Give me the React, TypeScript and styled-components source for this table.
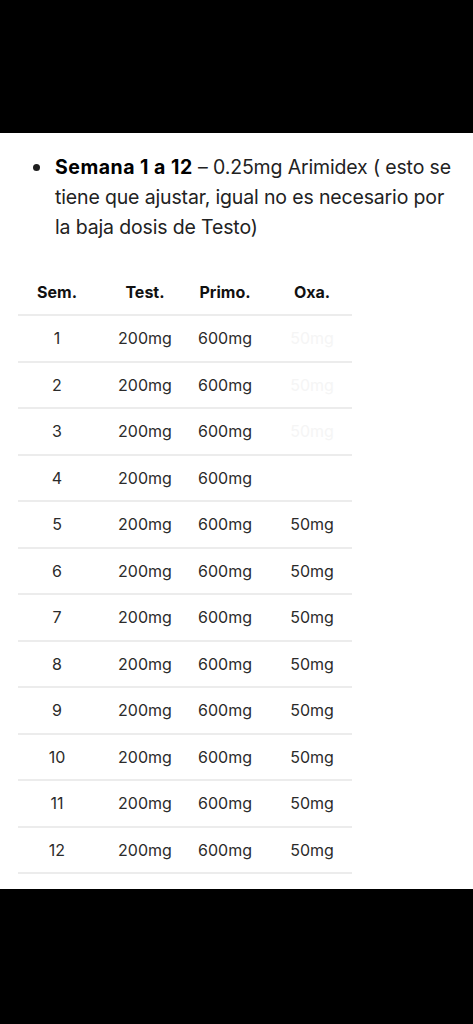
import React from "react";
import styled, { createGlobalStyle } from "styled-components";

const Global = createGlobalStyle`
  html, body { margin: 0; padding: 0; background: #000; }
  body { font-family: Inter, "Noto Sans", "Liberation Sans", sans-serif; -webkit-font-smoothing: antialiased; }
`;

const Screen = styled.div`
  width: 473px;
  height: 1024px;
  display: flex;
  flex-direction: column;
  background: #000;
`;

const Bar = styled.div<{ $h: number }>`
  height: ${(p) => p.$h}px;
  flex: none;
  background: #000;
`;

const Page = styled.div`
  flex: none;
  height: 756px;
  background: #fff;
  padding: 19px 0 0 18px;
  box-sizing: border-box;
  overflow: hidden;
`;

const List = styled.ul`
  margin: 0;
  padding: 0 0 0 37px;
  list-style: none;
`;

const Item = styled.li`
  position: relative;
  font-size: 19.5px;
  line-height: 30px;
  color: #222;
  letter-spacing: -0.15px;
  width: 405px;
  &::before {
    content: "";
    position: absolute;
    left: -22px;
    top: 12px;
    width: 7px;
    height: 7px;
    border-radius: 50%;
    background: #1f1f1f;
  }
`;

const Strong = styled.strong`
  font-weight: 700;
  color: #000;
  letter-spacing: 0.5px;
`;

const Table = styled.div`
  margin-top: 28px;
  width: 334px;
  display: flex;
  flex-direction: column;
`;

const Row = styled.div<{ $head?: boolean }>`
  display: grid;
  grid-template-columns: 78px 98px 62px 96px;
  height: ${(p) => (p.$head ? "44px" : "44.5px")};
  border-bottom: 2px solid #ececec;
  align-items: center;
`;

const Cell = styled.div<{ $head?: boolean; $shift?: number; $faint?: boolean }>`
  text-align: center;
  padding-left: ${(p) => p.$shift ?? 0}px;
  font-size: 16px;
  font-weight: ${(p) => (p.$head ? 700 : 400)};
  color: ${(p) => (p.$faint ? "#f5f5f5" : p.$head ? "#111" : "#2b2b2b")};
  white-space: nowrap;
`;

const rows = Array.from({ length: 12 }, (_, i) => ({
  sem: String(i + 1),
  oxa: i === 3 ? "" : "50mg",
  faint: i < 3,
}));

export default function App() {
  return (
    <Screen>
      <Global />
      <Bar $h={133} />
      <Page>
        <List>
          <Item>
            <Strong>Semana 1 a 12</Strong> – 0.25mg Arimidex ( esto se tiene que ajustar, igual no es necesario por la baja dosis de Testo)
          </Item>
        </List>
        <Table>
          <Row $head>
            <Cell $head>Sem.</Cell>
            <Cell $head>Test.</Cell>
            <Cell $head>Primo.</Cell>
            <Cell $head $shift={16}>Oxa.</Cell>
          </Row>
          {rows.map((r) => (
            <Row key={r.sem}>
              <Cell>{r.sem}</Cell>
              <Cell>200mg</Cell>
              <Cell>600mg</Cell>
              <Cell $shift={16} $faint={r.faint}>{r.oxa}</Cell>
            </Row>
          ))}
        </Table>
      </Page>
      <Bar $h={135} />
    </Screen>
  );
}
